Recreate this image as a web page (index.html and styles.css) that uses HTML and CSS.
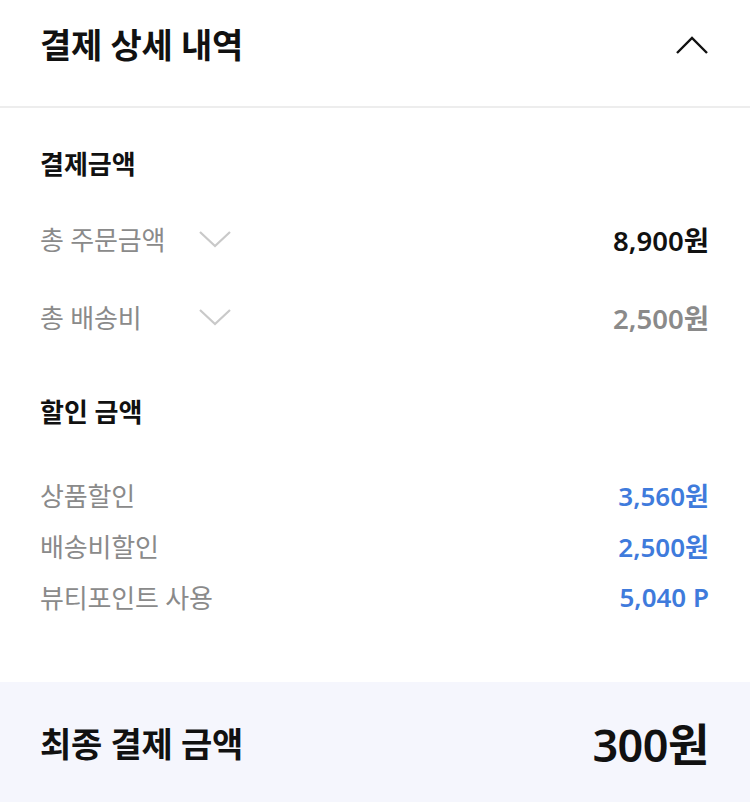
FILE: index.html
```html
<!DOCTYPE HTML>
<html>
<head>
    <title>결제 상세 내역</title>
    <link rel="stylesheet" href="styles.css">
</head>
<body>
    <div class="header">
        <p class="header-title">결제 상세 내역</p>
        <svg class="toggle-up" width="32" height="20" viewBox="0 0 32 20">
            <polyline points="1,18 16,3 31,18" fill="none" stroke="#111" stroke-width="2.4"/>
        </svg>
    </div>

    <div class="section">
        <p class="section-title">결제금액</p>

        <div class="sum-row">
            <div class="sum-label">
                <span class="label-text">총 주문금액</span>
                <svg class="toggle-down" width="32" height="18" viewBox="0 0 32 18">
                    <polyline points="1,2 16,16 31,2" fill="none" stroke="#c9c9c9" stroke-width="2.2"/>
                </svg>
            </div>
            <span class="sum-value">8,900원</span>
        </div>

        <div class="sum-row">
            <div class="sum-label">
                <span class="label-text">총 배송비</span>
                <svg class="toggle-down" width="32" height="18" viewBox="0 0 32 18">
                    <polyline points="1,2 16,16 31,2" fill="none" stroke="#c9c9c9" stroke-width="2.2"/>
                </svg>
            </div>
            <span class="sum-value gray">2,500원</span>
        </div>

        <p class="section-title discount-title">할인 금액</p>

        <div class="discount-list">
            <div class="discount-row">
                <span class="label-text">상품할인</span>
                <span class="discount-value">3,560원</span>
            </div>
            <div class="discount-row">
                <span class="label-text">배송비할인</span>
                <span class="discount-value">2,500원</span>
            </div>
            <div class="discount-row">
                <span class="label-text">뷰티포인트 사용</span>
                <span class="discount-value">5,040 P</span>
            </div>
        </div>
    </div>

    <div class="total">
        <p class="total-title">최종 결제 금액</p>
        <p class="total-value">300원</p>
    </div>
</body>
</html>
```

FILE: styles.css
```css
body{
    margin:0;
    background-color:white;
    color:#111;
    font-family:"Noto Sans","Noto Sans CJK KR",sans-serif;
}

p{
    margin:0;
}

.header{
    height:90px;
    padding:0 42px 16px 40px;
    display:flex;
    align-items:center;
    justify-content:space-between;
    border-bottom:2px solid #ededed;
}

.header-title{
    font-size:34px;
    font-weight:bold;
    line-height:44px;
    letter-spacing:-0.3px;
}

.section{
    padding:38px 41px 60px 40px;
}

.section-title{
    font-size:26px;
    font-weight:bold;
    line-height:36px;
}

.sum-row{
    height:78px;
    display:flex;
    align-items:center;
    justify-content:space-between;
}

.sum-row:first-of-type{
    margin-top:18px;
}

.sum-label{
    display:flex;
    align-items:center;
}

.label-text{
    font-size:26px;
    color:#8a8a8a;
    letter-spacing:-0.2px;
}

.sum-label .label-text{
    width:159px;
}

.sum-value{
    font-size:27.5px;
    font-weight:600;
    color:#111;
}

.gray{
    color:#8a8a8a;
}

.discount-title{
    margin-top:38px;
}

.discount-list{
    margin-top:39px;
}

.discount-row{
    height:51px;
    display:flex;
    align-items:center;
    justify-content:space-between;
}

.discount-value{
    font-size:26px;
    font-weight:600;
    color:#3f7bdc;
}

.total{
    height:120px;
    padding:0 41px 0 40px;
    background-color:#f5f6fd;
    display:flex;
    align-items:center;
    justify-content:space-between;
}

.total-title{
    font-size:34px;
    font-weight:bold;
    letter-spacing:-0.3px;
}

.total-value{
    font-size:45px;
    font-weight:600;
    letter-spacing:-0.5px;
}
```
